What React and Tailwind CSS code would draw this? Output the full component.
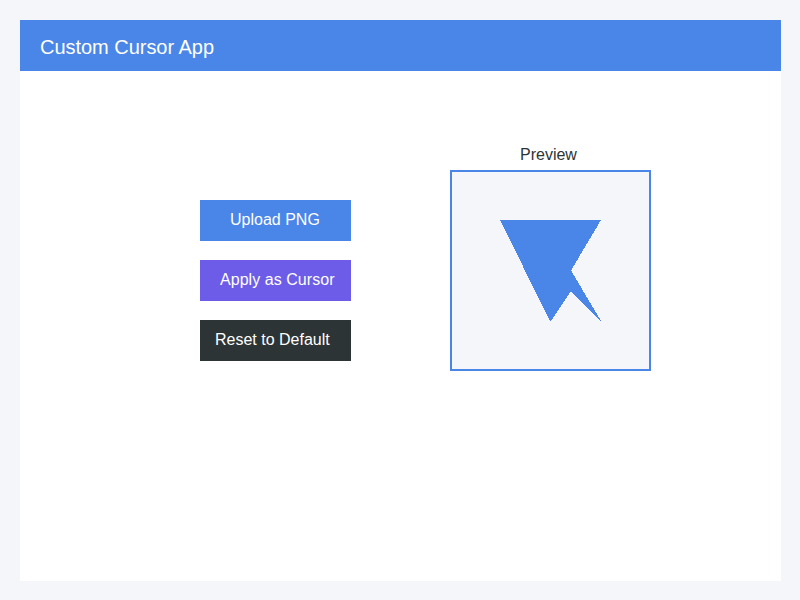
const buttons = [
  { label: "Upload PNG", style: "bg-[#4a86e8] pl-[30px]" },
  { label: "Apply as Cursor", style: "bg-[#6c5ce7] pl-5 tracking-[0.05px]" },
  { label: "Reset to Default", style: "bg-[#2d3436] pl-[15px]" },
];

export default function App() {
  return (
    <div className="h-[600px] w-[800px] bg-[#f5f6fa] p-5 font-['Liberation_Sans',Arial,sans-serif]">
      <div className="flex h-[561px] w-[761px] flex-col bg-white">
        <header className="flex h-[51px] items-center bg-[#4a86e8] pl-5 pt-[3px] text-[20px] leading-6 tracking-[-0.03px] text-white">
          <h1>Custom Cursor App</h1>
        </header>
        <main className="flex gap-[99px] pl-[180px] pt-[74px]">
          <div className="flex w-[151px] flex-col gap-[19px] pt-[55px]">
            {buttons.map(({ label, style }) => (
              <button key={label} className={`h-[41px] whitespace-nowrap pb-px text-left text-base text-white ${style}`}>
                {label}
              </button>
            ))}
          </div>
          <section className="w-[201px]">
            <h2 className="mb-0.5 h-[23px] pl-[70px] text-base leading-5 text-[#2d3436]">Preview</h2>
            <div className="h-[201px] w-[201px] border-2 border-[#4a86e8] bg-[#f5f6fa] pl-12 pt-12">
              <svg width="101" height="101" viewBox="0 0 101 101" shapeRendering="crispEdges">
                <path d="M0 0H101L71 50.5L101 101H100L70.5 71.5L51 101H50Z" fill="#4a86e8" />
              </svg>
            </div>
          </section>
        </main>
      </div>
    </div>
  );
}
